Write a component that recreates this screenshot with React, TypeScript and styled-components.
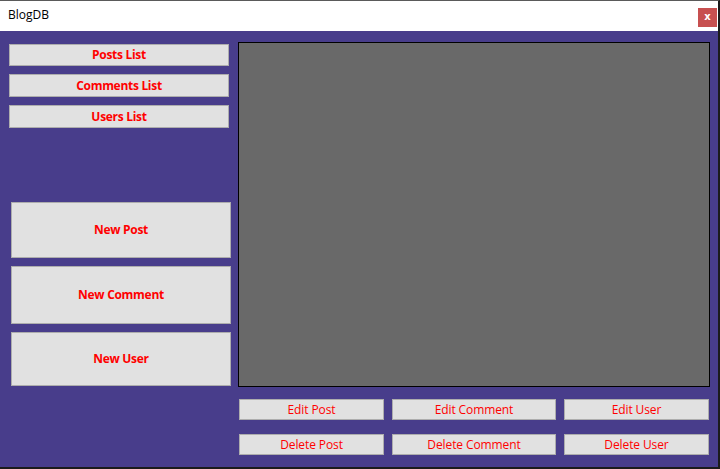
import React from "react";
import styled, { createGlobalStyle } from "styled-components";

const Global = createGlobalStyle`
  html, body { margin: 0; padding: 0; background: #1e1e1e; }
  * { box-sizing: border-box; }
`;

const Window = styled.div`
  width: 720px;
  height: 469px;
  display: flex;
  flex-direction: column;
  border-top: 1px solid #5a5a5a;
  border-right: 2px solid #1b1b1b;
  border-bottom: 2px solid #1b1b1b;
  font-family: "Open Sans", "Noto Sans", sans-serif;
  font-size: 12px;
  overflow: hidden;
`;

const TitleBar = styled.div`
  height: 30px;
  flex: none;
  background: #ffffff;
  display: flex;
  align-items: flex-start;
  justify-content: space-between;
`;

const Title = styled.span`
  margin: 6px 0 0 8px;
  color: #000;
  font-size: 12px;
  line-height: 16px;
`;

const CloseButton = styled.button`
  margin: 7px 1px 0 0;
  width: 19px;
  height: 19px;
  padding: 0 0 2px;
  border: none;
  background: #c75050;
  color: #fff;
  font-family: "DejaVu Sans", sans-serif;
  font-weight: bold;
  font-size: 10px;
  line-height: 1;
  display: flex;
  align-items: center;
  justify-content: center;
`;

const Body = styled.div`
  flex: 1;
  background: #483d8b;
  display: flex;
  padding-left: 9px;
`;

const Sidebar = styled.div`
  width: 222px;
  display: flex;
  flex-direction: column;
  padding-top: 13px;
`;

const FormButton = styled.button<{ $h: number; $mt?: number; $ml?: number; $w?: string; $bold?: boolean }>`
  width: ${(p) => p.$w ?? "220px"};
  height: ${(p) => p.$h}px;
  margin-top: ${(p) => p.$mt ?? 0}px;
  margin-left: ${(p) => p.$ml ?? 0}px;
  flex: none;
  background: #e1e1e1;
  border: 1px solid #adadad;
  color: #ff0000;
  font-family: "Open Sans", "Noto Sans", sans-serif;
  font-size: 12px;
  font-weight: ${(p) => (p.$bold ? 700 : 500)};
  letter-spacing: ${(p) => (p.$bold ? "-0.3px" : "-0.1px")};
  padding: 0 0 1px;
  display: flex;
  align-items: center;
  justify-content: center;
`;

const Main = styled.div`
  margin-left: 7px;
  padding-top: 11px;
  display: flex;
  flex-direction: column;
`;

const Viewer = styled.div`
  width: 472px;
  height: 345px;
  background: #696969;
  border: 1px solid #000;
`;

const ActionGrid = styled.div`
  margin-top: 12px;
  padding-left: 1px;
  display: grid;
  grid-template-columns: 145px 164px 145px;
  grid-auto-rows: 21px;
  column-gap: 8px;
  row-gap: 14px;
`;

const lists = [
  { label: "Posts List", h: 22, mt: 0 },
  { label: "Comments List", h: 23, mt: 8 },
  { label: "Users List", h: 23, mt: 8 },
];

const creators = [
  { label: "New Post", h: 56, mt: 74 },
  { label: "New Comment", h: 58, mt: 8 },
  { label: "New User", h: 54, mt: 8 },
];

const actions = [
  "Edit Post",
  "Edit Comment",
  "Edit User",
  "Delete Post",
  "Delete Comment",
  "Delete User",
];

export default function App() {
  return (
    <>
      <Global />
      <Window>
        <TitleBar>
          <Title>BlogDB</Title>
          <CloseButton aria-label="Close">x</CloseButton>
        </TitleBar>
        <Body>
          <Sidebar>
            {lists.map((b) => (
              <FormButton key={b.label} $h={b.h} $mt={b.mt} $bold>
                {b.label}
              </FormButton>
            ))}
            {creators.map((b) => (
              <FormButton key={b.label} $h={b.h} $mt={b.mt} $ml={2} $bold>
                {b.label}
              </FormButton>
            ))}
          </Sidebar>
          <Main>
            <Viewer />
            <ActionGrid>
              {actions.map((a) => (
                <FormButton key={a} $h={21} $w="100%">
                  {a}
                </FormButton>
              ))}
            </ActionGrid>
          </Main>
        </Body>
      </Window>
    </>
  );
}
